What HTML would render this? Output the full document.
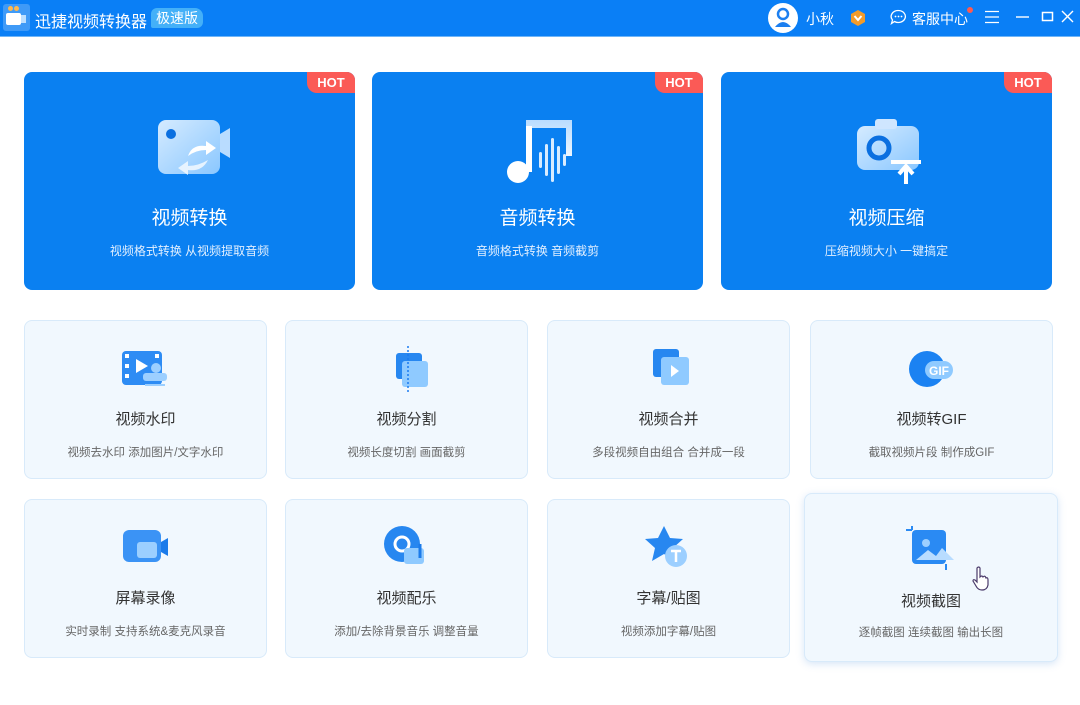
<!DOCTYPE html>
<html><head><meta charset="utf-8"><style>
*{margin:0;padding:0;box-sizing:border-box}
body{width:1080px;height:705px;background:#fff;font-family:"Liberation Sans","Noto Sans CJK SC",sans-serif;position:relative;overflow:hidden}
.hdr{position:absolute;left:0;top:0;width:1080px;height:37px;background:#0a7ff6;border-bottom:1px solid #6fb5f8}
.t{position:absolute;color:#fff;white-space:nowrap}
.big{position:absolute;top:72px;width:331px;height:218px;background:#0a80f1;border-radius:8px;overflow:hidden;text-align:center;color:#fff}
.big .h{position:absolute;right:0;top:0;width:48px;height:21px;background:#fb5a56;border-bottom-left-radius:10px;font:bold 13px "Liberation Sans",sans-serif;line-height:21px;color:#fff}
.big .ti{position:absolute;top:131px;width:100%;font-size:19px}
.big .su{position:absolute;top:170px;width:100%;font-size:12px;color:#e2efff}
.big .ic{position:absolute;left:50%;top:44px;margin-left:-40px;width:80px;height:70px}
.sm{position:absolute;width:243px;height:159px;background:#f1f8fe;border:1px solid #d8eafa;border-radius:8px;text-align:center}
.sm .ti{position:absolute;top:87px;width:100%;font-size:15px;color:#333}
.sm .su{position:absolute;top:123px;width:100%;font-size:11.5px;color:#666}
.sm svg{position:absolute;left:50%;top:24px;margin-left:-25px}
</style></head><body>
<div class="hdr">
  <div style="position:absolute;left:3px;top:4px;width:27px;height:27px;background:#3f9af7;border-radius:3px"></div>
  <div style="position:absolute;left:6px;top:13px;width:15px;height:12px;background:#fff;border-radius:2px"></div>
  <div style="position:absolute;left:21px;top:15px;width:5px;height:8px;background:#bfe0ff"></div>
  <div style="position:absolute;left:8px;top:6px;width:5px;height:5px;background:#ffb84c;border-radius:50%"></div>
  <div style="position:absolute;left:14px;top:6px;width:5px;height:5px;background:#ffb84c;border-radius:50%"></div>
  <div class="t" style="left:35px;top:8px;font-size:16px">迅捷视频转换器</div>
  <div class="t" style="left:151px;top:8px;width:52px;height:20px;background:#44b0f8;border-radius:6px 8px 6px 2px;font-size:14px;line-height:20px;text-align:center">极速版</div>
  <div style="position:absolute;left:768px;top:3px;width:30px;height:30px;border-radius:50%;background:#fff"></div>
  <svg style="position:absolute;left:768px;top:3px" width="30" height="30"><circle cx="15" cy="11" r="5" fill="none" stroke="#1c7ff0" stroke-width="2.5"/><path d="M7 24 Q15 14 23 24" fill="#1c7ff0"/></svg>
  <div class="t" style="left:806px;top:9px;font-size:14px">小秋</div>
  <svg style="position:absolute;left:849px;top:9px" width="18" height="18"><path d="M9 1 L16 5 V13 L9 17 L2 13 V5Z" fill="#f39b2a"/><path d="M5.5 7 L9 11 L12.5 7" stroke="#fff" stroke-width="2" fill="none"/></svg>
  <svg style="position:absolute;left:890px;top:9px" width="17" height="16"><path d="M8.5 1.5a7 6 0 1 1 -4 11 l-3 2 1-3.5a7 6 0 0 1 6-9.5z" fill="none" stroke="#fff" stroke-width="1.3"/><circle cx="5.5" cy="7.5" r=".9" fill="#fff"/><circle cx="8.5" cy="7.5" r=".9" fill="#fff"/><circle cx="11.5" cy="7.5" r=".9" fill="#fff"/></svg>
  <div class="t" style="left:912px;top:9px;font-size:14px">客服中心</div>
  <div style="position:absolute;left:967px;top:7px;width:6px;height:6px;border-radius:50%;background:#ff5a4e"></div>
  <svg style="position:absolute;left:984px;top:10px" width="16" height="14"><path d="M1 1.5H15M1 7H15M1 12.5H15" stroke="#fff" stroke-width="1.3"/></svg>
  <svg style="position:absolute;left:1015px;top:10px" width="60" height="14"><path d="M1 7H14" stroke="#fff" stroke-width="1.4"/><rect x="27.5" y="2.5" width="10" height="8" fill="none" stroke="#fff" stroke-width="1.5"/><path d="M47 1 L58 12 M58 1 L47 12" stroke="#fff" stroke-width="1.4"/></svg>
</div>

<div class="big" style="left:24px"><div class="h">HOT</div>
 <svg class="ic" viewBox="0 0 80 70"><defs><linearGradient id="g1" x1="0" y1="0" x2="1" y2="1"><stop offset="0" stop-color="#d5ebff"/><stop offset="1" stop-color="#8ac7ff"/></linearGradient></defs><rect x="8" y="4" width="62" height="54" rx="8" fill="url(#g1)"/><path d="M70 18 L80 12 V42 L70 36Z" fill="#b9dcff"/><circle cx="21" cy="18" r="5" fill="#0a6fe0"/><path d="M38 40 Q42 28 56 30 V25 L66 32 L56 39 V34 Q46 34 38 40Z" fill="#fff"/><path d="M58 44 Q52 56 38 54 V59 L28 52 L38 45 V50 Q48 50 58 44Z" fill="#e6f3ff"/></svg>
 <div class="ti">视频转换</div><div class="su">视频格式转换 从视频提取音频</div></div>
<div class="big" style="left:372px"><div class="h">HOT</div>
 <svg class="ic" viewBox="0 0 80 70"><defs><linearGradient id="g2" x1="0" y1="0" x2="0" y2="1"><stop offset="0" stop-color="#b9dcff"/><stop offset="1" stop-color="#fff"/></linearGradient></defs><path d="M28 4 H74 V40 H68 V12 H34 V52 H28Z" fill="url(#g2)"/><circle cx="20" cy="56" r="11" fill="#fff"/><rect x="28" y="10" width="6" height="46" fill="#fff"/><g fill="#d8ecff"><rect x="41" y="36" width="3" height="16" rx="1.5"/><rect x="47" y="28" width="3" height="32" rx="1.5"/><rect x="53" y="22" width="3" height="44" rx="1.5"/><rect x="59" y="30" width="3" height="28" rx="1.5"/><rect x="65" y="38" width="3" height="12" rx="1.5"/></g></svg>
 <div class="ti">音频转换</div><div class="su">音频格式转换 音频截剪</div></div>
<div class="big" style="left:721px"><div class="h">HOT</div>
 <svg class="ic" viewBox="0 0 80 70"><rect x="10" y="10" width="62" height="44" rx="8" fill="url(#g1)"/><rect x="28" y="3" width="22" height="10" rx="3" fill="#cfe6ff"/><circle cx="32" cy="32" r="10" fill="none" stroke="#0a6fe0" stroke-width="5"/><path d="M44 46 H74 M59 50 V68 M52 58 L59 50 L66 58" stroke="#fff" stroke-width="4" fill="none"/></svg>
 <div class="ti">视频压缩</div><div class="su">压缩视频大小 一键搞定</div></div>

<div class="sm" style="left:24px;top:320px"><svg width="50" height="42"><rect x="1" y="6" width="40" height="34" rx="4" fill="#2e8cf4"/><g fill="#fff"><rect x="4" y="9" width="4" height="4"/><rect x="4" y="19" width="4" height="4"/><rect x="4" y="29" width="4" height="4"/><rect x="34" y="9" width="4" height="4"/></g><path d="M15 14 L27 21 L15 28Z" fill="#fff"/><circle cx="35" cy="23" r="5" fill="#9ccfff"/><rect x="22" y="28" width="24" height="8" rx="3" fill="#9ccfff"/><rect x="24" y="39" width="20" height="2" fill="#9ccfff"/></svg><div class="ti">视频水印</div><div class="su">视频去水印 添加图片/文字水印</div></div>
<div class="sm" style="left:285px;top:320px"><svg width="50" height="50"><rect x="14" y="8" width="26" height="26" rx="3" fill="#2787f0"/><rect x="20" y="16" width="26" height="26" rx="3" fill="#8fcaff"/><path d="M26 1 V48" stroke="#1a7af0" stroke-width="1.5" stroke-dasharray="2 2"/></svg><div class="ti">视频分割</div><div class="su">视频长度切割 画面截剪</div></div>
<div class="sm" style="left:547px;top:320px"><svg width="50" height="50"><rect x="9" y="4" width="26" height="28" rx="3" fill="#2787f0"/><rect x="17" y="12" width="28" height="28" rx="3" fill="#8fcaff"/><path d="M27 20 L35 26 L27 32Z" fill="#fff"/></svg><div class="ti">视频合并</div><div class="su">多段视频自由组合 合并成一段</div></div>
<div class="sm" style="left:810px;top:320px"><svg width="50" height="50"><circle cx="20" cy="24" r="18" fill="#1b82f2"/><rect x="18" y="16" width="28" height="18" rx="9" fill="#8fcaff"/><text x="32" y="30" font-size="12" font-weight="bold" fill="#fff" text-anchor="middle" font-family="Liberation Sans">GIF</text></svg><div class="ti">视频转GIF</div><div class="su">截取视频片段 制作成GIF</div></div>

<div class="sm" style="left:24px;top:499px"><svg width="50" height="50"><rect x="2" y="6" width="38" height="32" rx="6" fill="#3b93f5"/><rect x="16" y="18" width="20" height="16" rx="3" fill="#9ccfff"/><path d="M40 18 L47 14 V32 L40 28Z" fill="#1b7bea"/></svg><div class="ti">屏幕录像</div><div class="su">实时录制 支持系统&amp;麦克风录音</div></div>
<div class="sm" style="left:285px;top:499px"><svg width="50" height="50"><circle cx="20" cy="20" r="18" fill="#2787f0"/><circle cx="20" cy="20" r="7" fill="none" stroke="#fff" stroke-width="3"/><rect x="22" y="24" width="20" height="16" rx="3" fill="#8fcaff"/><path d="M38 20 V34" stroke="#1b7bea" stroke-width="3"/></svg><div class="ti">视频配乐</div><div class="su">添加/去除背景音乐 调整音量</div></div>
<div class="sm" style="left:547px;top:499px"><svg width="50" height="50"><path d="M20 2 L26 14 L39 15 L29 24 L32 37 L20 30 L8 37 L11 24 L1 15 L14 14Z" fill="#2787f0"/><circle cx="32" cy="32" r="11" fill="#9ccfff"/><path d="M27 27 H37 M32 27 V38" stroke="#fff" stroke-width="2.5"/></svg><div class="ti">字幕/贴图</div><div class="su">视频添加字幕/贴图</div></div>
<div class="sm" style="left:804px;top:493px;width:254px;height:169px;box-shadow:0 2px 8px rgba(120,170,230,.3)"><svg style="top:32px" width="50" height="50"><rect x="6" y="4" width="34" height="34" rx="4" fill="#2a8af3"/><circle cx="20" cy="17" r="4" fill="#9ccfff"/><path d="M10 34 L22 24 L30 30 L36 22 L48 34Z" fill="#b8dcff"/><path d="M0 4 H6 M6 0 V4 M40 38 V44" stroke="#2a8af3" stroke-width="2"/></svg>
 <svg style="position:absolute;left:166px;top:72px;margin:0" width="20" height="26"><path d="M6 2 Q8 0 9 2 V11 Q11 9 12 11 Q14 9 15 12 Q17 11 17 14 V19 Q16 24 11 24 Q7 24 5 20 L2 15 Q2 13 4 14 L6 16Z" fill="#fff" stroke="#4a3a6a" stroke-width="1.2"/></svg>
 <div class="ti" style="top:96px">视频截图</div><div class="su" style="top:130px">逐帧截图 连续截图 输出长图</div></div>
</body></html>
